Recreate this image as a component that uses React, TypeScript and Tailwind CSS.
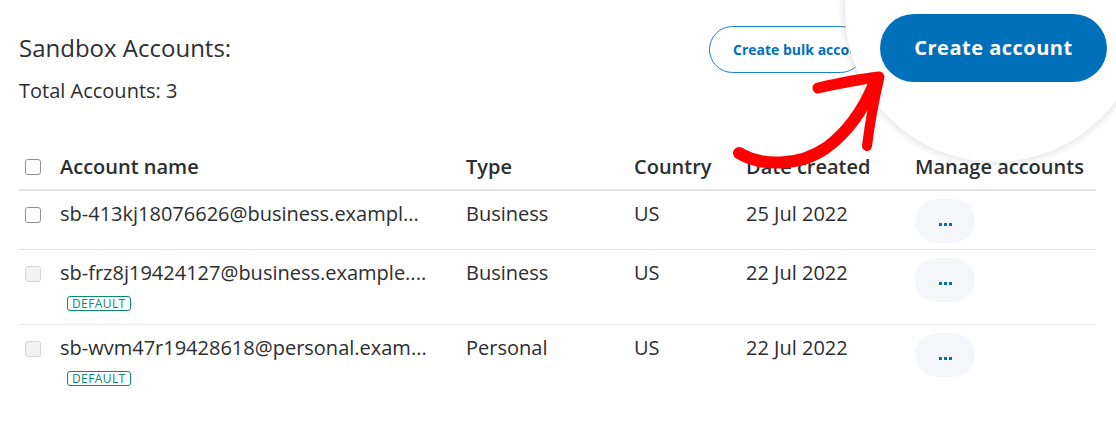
import React from 'react';

interface Account {
  email: string;
  type: string;
  country: string;
  created: string;
  isDefault: boolean;
}

const accounts: Account[] = [
  { email: 'sb-413kj18076626@business.exampl...', type: 'Business', country: 'US', created: '25 Jul 2022', isDefault: false },
  { email: 'sb-frz8j19424127@business.example....', type: 'Business', country: 'US', created: '22 Jul 2022', isDefault: true },
  { email: 'sb-wvm47r19428618@personal.exam...', type: 'Personal', country: 'US', created: '22 Jul 2022', isDefault: true },
];

function Checkbox({ disabled }: { disabled?: boolean }) {
  return (
    <span
      className={`block w-[16px] h-[16px] rounded-[3px] border ${
        disabled ? 'border-[#d6d6d6] bg-[#f2f2f2]' : 'border-[#8f8f8f] bg-white'
      }`}
    />
  );
}

function Arrow() {
  return (
    <svg className="absolute left-0 top-0 z-30 pointer-events-none" width="1116" height="425" viewBox="0 0 1116 425">
      <g fill="none" stroke="#ff0000" strokeLinecap="round" strokeLinejoin="round">
        <path d="M739 153 C 762 167 800 166 826 148 C 848 132 864 108 874 84" strokeWidth="12" />
        <path d="M818 88 C 840 83 860 79 879 77" strokeWidth="11" />
        <path d="M879 79 C 874 100 870 122 867 146" strokeWidth="10" />
      </g>
    </svg>
  );
}

export default function App() {
  return (
    <div className="relative w-[1116px] h-[425px] bg-white overflow-hidden font-['Open_Sans',sans-serif] text-[#2c2e2f]">
      {/* Header */}
      <div className="flex justify-between pl-[19px] pr-[9px] pt-[14px]">
        <div className="pt-[19px]">
          <h1 className="text-[24px] leading-[30px]">Sandbox Accounts:</h1>
          <p className="mt-[16px] text-[20px] leading-[24px]">Total Accounts: 3</p>
        </div>
        <div className="flex items-center gap-[16px] h-[68px]">
          <button className="relative z-0 w-[155px] h-[47px] mt-[3px] rounded-full border border-[#1f7fc7] text-[#0070ba] text-[14px] font-bold pl-[23px] text-left whitespace-nowrap overflow-hidden">
            Create bulk accounts
          </button>
          <button className="relative z-20 w-[227px] h-[68px] rounded-full bg-[#0070ba] text-white text-[20px] font-bold tracking-[0.5px]">
            Create account
          </button>
        </div>
      </div>

      {/* Magnifier */}
      <div className="absolute left-[845px] top-[-138px] w-[300px] h-[300px] rounded-full bg-white z-10 shadow-[0_0_10px_rgba(0,0,0,0.16)]" />

      {/* Table */}
      <div className="mt-[48px] ml-[19px] w-[1077px]">
        <div className="grid grid-cols-[41px_406px_168px_112px_169px_1fr] items-center h-[40px] pb-[6px] border-b-2 border-[#e3e3e3] text-[20px] font-semibold">
          <div className="pl-[6px]"><Checkbox /></div>
          <div>Account name</div>
          <div>Type</div>
          <div>Country</div>
          <div>Date created</div>
          <div className="whitespace-nowrap">Manage accounts</div>
        </div>
        {accounts.map((a, i) => (
          <div
            key={a.email}
            className={`grid grid-cols-[41px_406px_168px_112px_169px_1fr] items-start pt-[8px] text-[20px] ${
              i < accounts.length - 1 ? 'border-b border-[#e6e6e6]' : ''
            } ${a.isDefault ? 'h-[75px]' : 'h-[59px]'}`}
          >
            <div className="pl-[6px] pt-[8px]"><Checkbox disabled={i > 0} /></div>
            <div className="leading-[28px] mt-[1px] whitespace-nowrap">
              <div>{a.email}</div>
              {a.isDefault && (
                <span className="inline-block mt-[9px] ml-[7px] px-[4px] h-[15px] leading-[13px] rounded-[3px] border border-[#0b8a6c] text-[#0b8a6c] text-[12px] tracking-[0.4px]">
                  DEFAULT
                </span>
              )}
            </div>
            <div className="leading-[28px] mt-[1px]">{a.type}</div>
            <div className="leading-[28px] mt-[1px]">{a.country}</div>
            <div className="leading-[28px] mt-[1px]">{a.created}</div>
            <div>
              <button className="w-[60px] h-[44px] pt-[6px] rounded-full bg-[#f4f6fa] flex items-center justify-center gap-[2px]">
                <span className="w-[3px] h-[3px] bg-[#0070ba]" />
                <span className="w-[3px] h-[3px] bg-[#0070ba]" />
                <span className="w-[3px] h-[3px] bg-[#0070ba]" />
              </button>
            </div>
          </div>
        ))}
      </div>

      <Arrow />
    </div>
  );
}
